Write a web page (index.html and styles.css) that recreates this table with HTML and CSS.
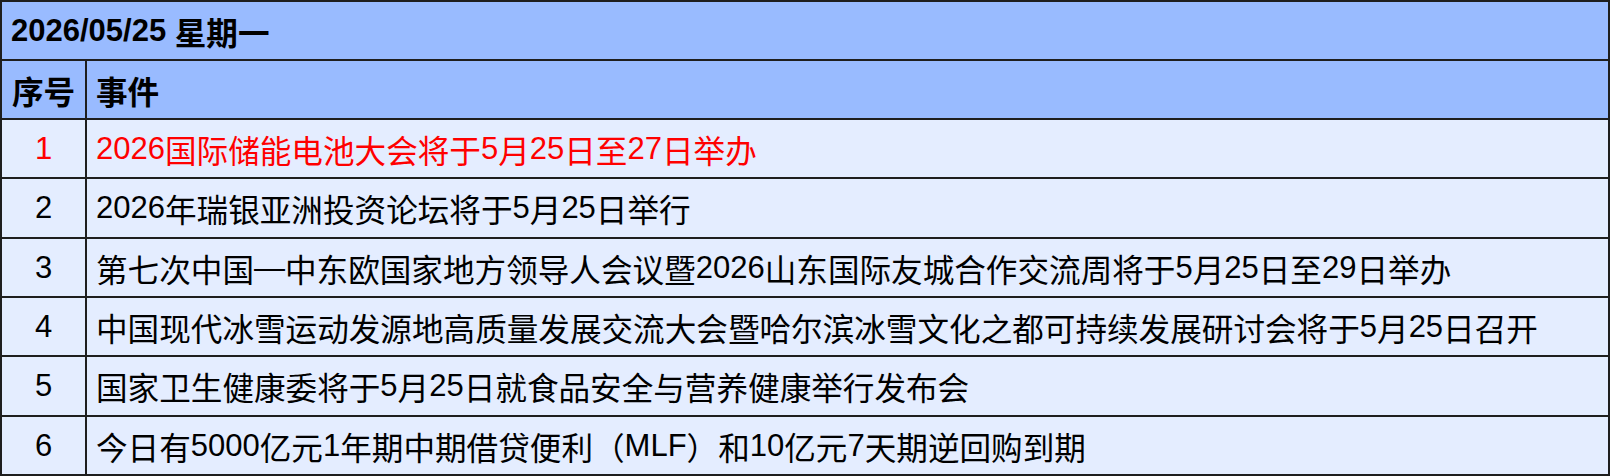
FILE: index.html
```html
<!DOCTYPE html>
<html lang="zh-CN">
<head>
<meta charset="utf-8">
<title>2026/05/25 星期一</title>
<link rel="stylesheet" href="styles.css">
</head>
<body>
<div class="sheet">
  <div class="cell title"><span class="lt">2026/05/25 </span>星期一</div>
  <div class="cell head num">序号</div>
  <div class="cell head">事件</div>
  <div class="cell num hot"><span class="lt">1</span></div>
  <div class="cell hot"><span class="lt">2026</span>国际储能电池大会将于<span class="lt">5</span>月<span class="lt">25</span>日至<span class="lt">27</span>日举办</div>
  <div class="cell num"><span class="lt">2</span></div>
  <div class="cell"><span class="lt">2026</span>年瑞银亚洲投资论坛将于<span class="lt">5</span>月<span class="lt">25</span>日举行</div>
  <div class="cell num"><span class="lt">3</span></div>
  <div class="cell">第七次中国<span class="lt">—</span>中东欧国家地方领导人会议暨<span class="lt">2026</span>山东国际友城合作交流周将于<span class="lt">5</span>月<span class="lt">25</span>日至<span class="lt">29</span>日举办</div>
  <div class="cell num"><span class="lt">4</span></div>
  <div class="cell">中国现代冰雪运动发源地高质量发展交流大会暨哈尔滨冰雪文化之都可持续发展研讨会将于<span class="lt">5</span>月<span class="lt">25</span>日召开</div>
  <div class="cell num"><span class="lt">5</span></div>
  <div class="cell">国家卫生健康委将于<span class="lt">5</span>月<span class="lt">25</span>日就食品安全与营养健康举行发布会</div>
  <div class="cell num"><span class="lt">6</span></div>
  <div class="cell">今日有<span class="lt">5000</span>亿元<span class="lt">1</span>年期中期借贷便利（<span class="lt">MLF</span>）和<span class="lt">10</span>亿元<span class="lt">7</span>天期逆回购到期</div>
</div>
</body>
</html>
```
FILE: styles.css
```css
html, body {
  margin: 0;
  padding: 0;
  background: #ffffff;
}

.sheet {
  box-sizing: border-box;
  width: 1610px;
  height: 476px;
  display: grid;
  grid-template-columns: 83px 1fr;
  grid-template-rows: 57px 57px 57px 58px 57px 57px 58px 57px;
  gap: 2px;
  padding: 2px;
  background: #1e1e1e;
  font-family: "Liberation Sans", "Noto Sans CJK SC", sans-serif;
  font-size: 31.6px;
  color: #000000;
}

.cell {
  display: flex;
  align-items: center;
  padding: 0 9px;
  background: #e4edff;
  white-space: nowrap;
  overflow: hidden;
}

.cell .lt {
  font-size: 31px;
  white-space: pre;
}

.title {
  grid-column: 1 / span 2;
  background: #99bbff;
  font-weight: bold;
}

.head {
  background: #99bbff;
  font-weight: bold;
}

.num {
  justify-content: center;
  padding: 0;
}

.hot {
  color: #ff0000;
}
```
